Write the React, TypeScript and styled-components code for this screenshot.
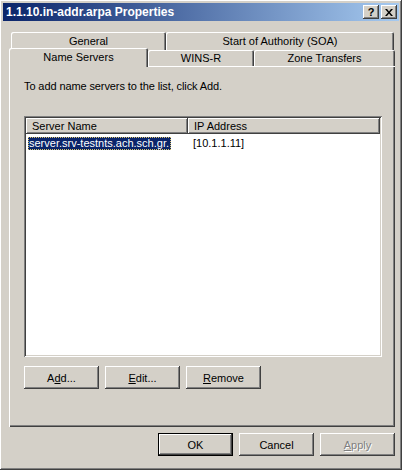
import React from "react";
import styled, { createGlobalStyle, css } from "styled-components";

const FACE = "#d4d0c8";
const SHADOW = "#808080";
const DARK = "#404040";
const FONT = `"Liberation Sans", Arial, sans-serif`;

const GlobalStyle = createGlobalStyle`
  html, body { margin: 0; padding: 0; background: ${FACE}; }
  * { box-sizing: border-box; }
`;

const raised = css`
  box-shadow: inset -1px -1px ${DARK}, inset 1px 1px #ffffff,
    inset -2px -2px ${SHADOW}, inset 2px 2px ${FACE};
`;

const Window = styled.div`
  width: 402px;
  height: 470px;
  background: ${FACE};
  padding: 3px;
  display: flex;
  flex-direction: column;
  font-family: ${FONT};
  font-size: 11px;
  color: #000;
  ${raised}
`;

const TitleBar = styled.div`
  height: 18px;
  flex: none;
  display: flex;
  align-items: center;
  padding: 0 2px 0 3px;
  background: linear-gradient(to right, #0a246a, #a6caf0);
`;

const TitleText = styled.div`
  flex: 1;
  color: #fff;
  font-weight: bold;
  font-size: 12px;
  white-space: nowrap;
`;

const CaptionButton = styled.div<{ $gap?: number }>`
  width: 16px;
  height: 14px;
  margin-left: ${(p) => p.$gap ?? 0}px;
  background: ${FACE};
  display: flex;
  align-items: center;
  justify-content: center;
  font-weight: bold;
  font-size: 11px;
  line-height: 1;
  ${raised}
`;

const Body = styled.div`
  flex: 1;
  display: flex;
  flex-direction: column;
  padding: 11px 4px 0 6px;
`;

const TabRow = styled.div<{ $indent: number; $height: number }>`
  display: flex;
  height: ${(p) => p.$height}px;
  padding-left: ${(p) => p.$indent}px;
  align-items: flex-end;
  position: relative;
  z-index: 1;
`;

const Tab = styled.div<{ $w: number; $h: number; $selected?: boolean }>`
  width: ${(p) => p.$w}px;
  height: ${(p) => p.$h}px;
  flex: none;
  background: ${FACE};
  display: flex;
  align-items: center;
  justify-content: center;
  border-top-left-radius: 2px;
  border-top-right-radius: 2px;
  box-shadow: inset 1px 1px #ffffff, inset -1px 0 ${DARK}, inset -2px 0 ${SHADOW};
  white-space: nowrap;
  ${(p) =>
    p.$selected &&
    css`
      margin-bottom: -1px;
      padding-bottom: 2px;
      z-index: 2;
      position: relative;
    `}
`;

const Panel = styled.div`
  width: 386px;
  height: 361px;
  flex: none;
  background: ${FACE};
  box-shadow: inset 1px 1px #ffffff, inset -1px -1px ${DARK},
    inset -2px -2px ${SHADOW};
  padding: 14px 13px 0 15px;
  display: flex;
  flex-direction: column;
`;

const Intro = styled.div`
  height: 13px;
  line-height: 13px;
  white-space: nowrap;
  letter-spacing: -0.1px;
`;

const ListView = styled.div`
  margin-top: 23px;
  height: 241px;
  background: #fff;
  padding: 2px;
  box-shadow: inset 1px 1px ${SHADOW}, inset -1px -1px #ffffff,
    inset 2px 2px ${DARK}, inset -2px -2px ${FACE};
  display: flex;
  flex-direction: column;
`;

const Header = styled.div`
  display: flex;
  height: 16px;
  flex: none;
`;

const HeaderCell = styled.div<{ $w?: number }>`
  width: ${(p) => (p.$w ? `${p.$w}px` : "auto")};
  flex: ${(p) => (p.$w ? "none" : "1")};
  background: ${FACE};
  padding: 1px 0 0 6px;
  line-height: 14px;
  white-space: nowrap;
  ${raised}
`;

const Row = styled.div`
  display: flex;
  height: 14px;
  margin-top: 2px;
  align-items: center;
`;

const Cell = styled.div<{ $w?: number; $selected?: boolean }>`
  width: ${(p) => (p.$w ? `${p.$w}px` : "auto")};
  flex: none;
  padding-left: ${(p) => (p.$selected ? 2 : 5)}px;
  white-space: nowrap;
  display: flex;
`;

const Highlight = styled.span`
  background: #0a246a;
  color: #fff;
  padding: 0 2px 0 1px;
  line-height: 13px;
  outline: 1px dotted #d8c26a;
  outline-offset: -1px;
`;

const PanelButtons = styled.div`
  display: flex;
  gap: 6px;
  margin-top: 9px;
`;

const Button = styled.div<{ $default?: boolean; $disabled?: boolean }>`
  width: 75px;
  height: 23px;
  background: ${FACE};
  display: flex;
  align-items: center;
  justify-content: center;
  white-space: nowrap;
  color: ${(p) => (p.$disabled ? SHADOW : "#000")};
  text-shadow: ${(p) => (p.$disabled ? "1px 1px #ffffff" : "none")};
  ${(p) =>
    p.$default
      ? css`
          box-shadow: inset 0 0 0 1px #000, inset -2px -2px ${DARK},
            inset 2px 2px #ffffff, inset -3px -3px ${SHADOW};
        `
      : raised}
`;

const U = styled.span`
  text-decoration: underline;
  text-underline-offset: 1px;
`;

const Footer = styled.div`
  display: flex;
  justify-content: flex-end;
  gap: 6px;
  margin-top: 6px;
  width: 386px;
`;

export default function App() {
  return (
    <>
      <GlobalStyle />
      <Window>
        <TitleBar>
          <TitleText>1.1.10.in-addr.arpa Properties</TitleText>
          <CaptionButton>?</CaptionButton>
          <CaptionButton $gap={2}>
            <svg width="8" height="7" viewBox="0 0 8 7">
              <path
                d="M0 0h2l2 2.5L6 0h2L5 3.5 8 7H6L4 4.5 2 7H0l3-3.5z"
                fill="#000"
              />
            </svg>
          </CaptionButton>
        </TitleBar>
        <Body>
          <TabRow $indent={2} $height={18}>
            <Tab $w={155} $h={18}>
              General
            </Tab>
            <Tab $w={228} $h={18}>
              Start of Authority (SOA)
            </Tab>
          </TabRow>
          <TabRow $indent={0} $height={16}>
            <Tab $w={139} $h={19} $selected>
              Name Servers
            </Tab>
            <Tab $w={106} $h={16}>
              WINS-R
            </Tab>
            <Tab $w={141} $h={16}>
              Zone Transfers
            </Tab>
          </TabRow>
          <Panel>
            <Intro>To add name servers to the list, click Add.</Intro>
            <ListView>
              <Header>
                <HeaderCell $w={162}>Server Name</HeaderCell>
                <HeaderCell>IP Address</HeaderCell>
              </Header>
              <Row>
                <Cell $w={162} $selected>
                  <Highlight>server.srv-testnts.ach.sch.gr.</Highlight>
                </Cell>
                <Cell>[10.1.1.11]</Cell>
              </Row>
            </ListView>
            <PanelButtons>
              <Button>
                <span>
                  A<U>d</U>d...
                </span>
              </Button>
              <Button>
                <span>
                  <U>E</U>dit...
                </span>
              </Button>
              <Button>
                <span>
                  <U>R</U>emove
                </span>
              </Button>
            </PanelButtons>
          </Panel>
          <Footer>
            <Button $default>OK</Button>
            <Button>Cancel</Button>
            <Button $disabled>
              <span>
                <U>A</U>pply
              </span>
            </Button>
          </Footer>
        </Body>
      </Window>
    </>
  );
}
